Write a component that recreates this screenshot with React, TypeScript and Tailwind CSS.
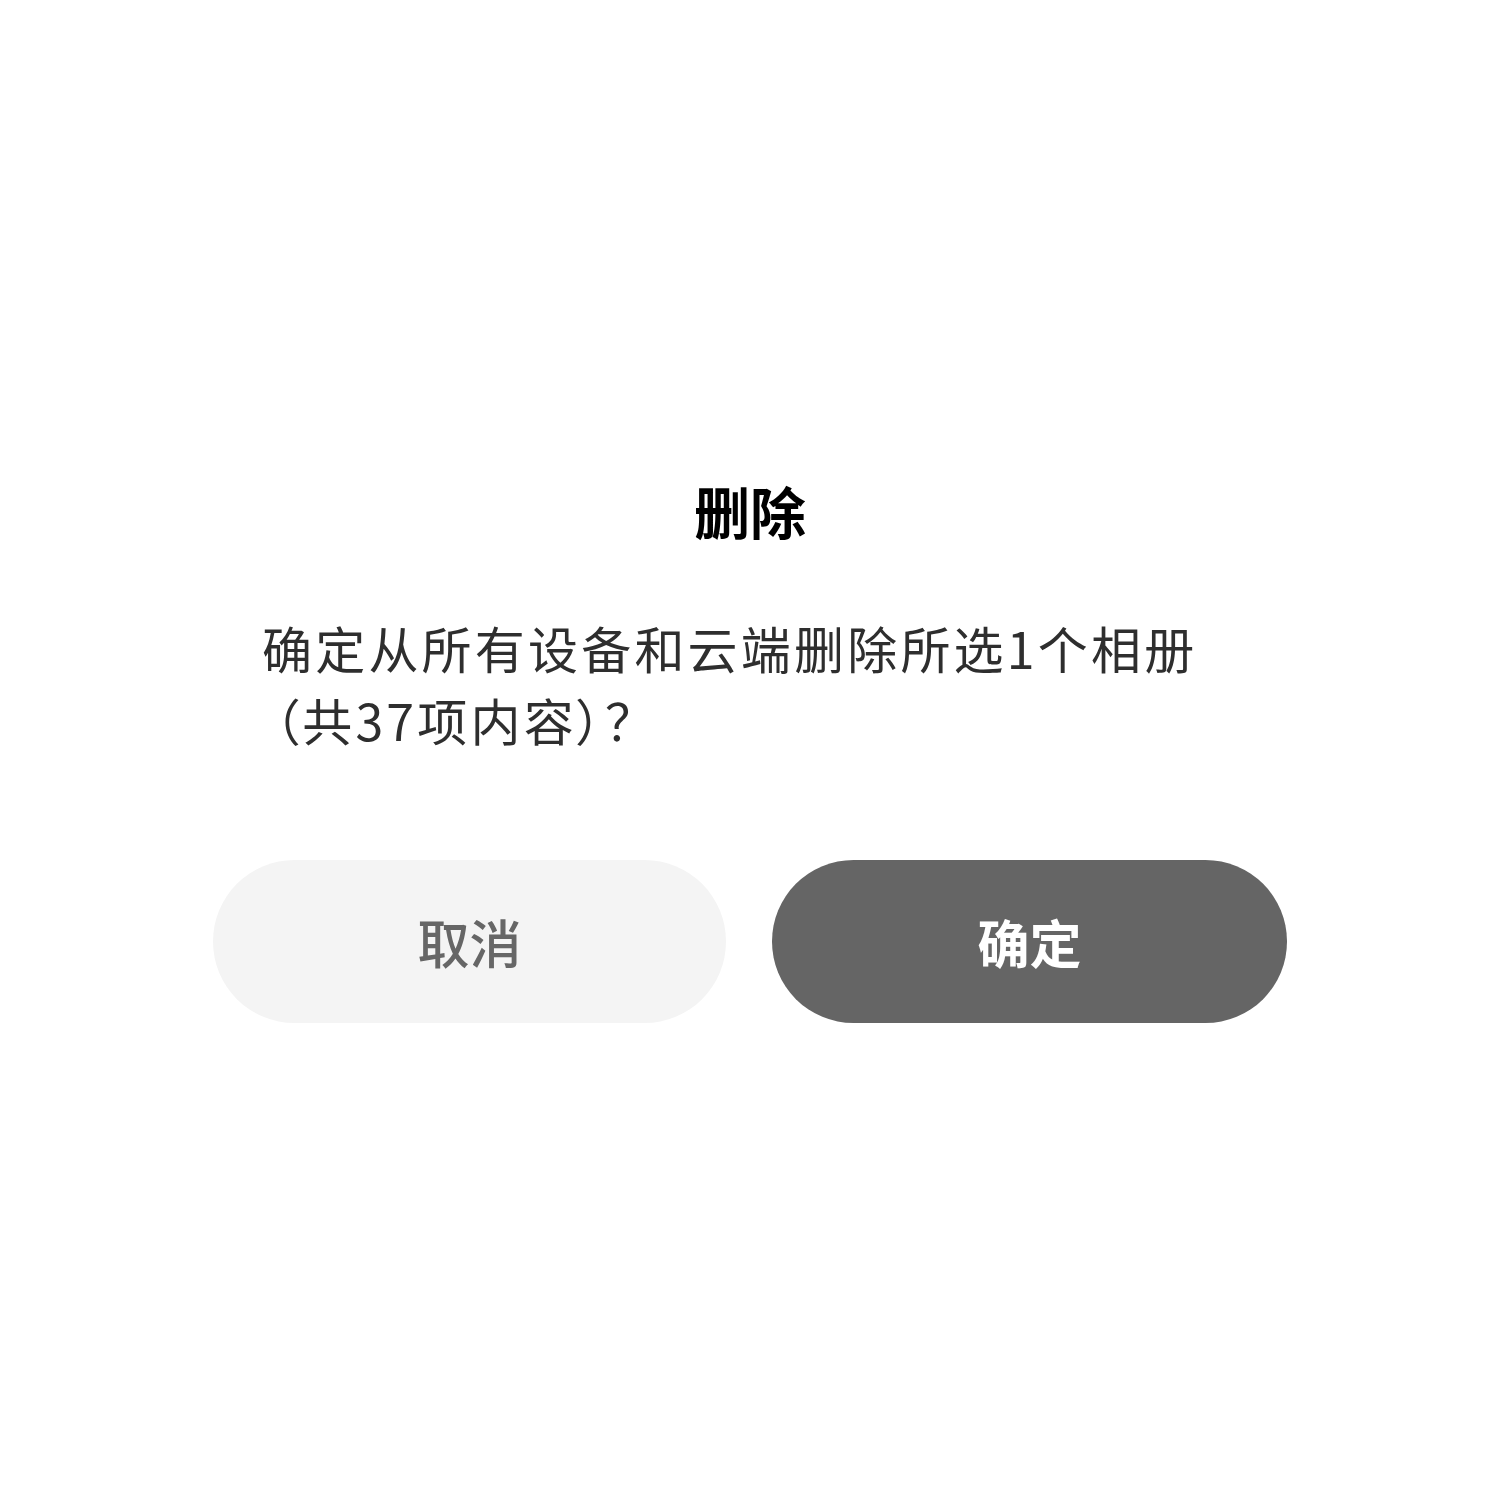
import React from 'react';

const FONT = { fontFamily: '"Noto Sans CJK SC", "Noto Sans", sans-serif' };

export default function App() {
  return (
    <div className="w-[1500px] h-[1500px] bg-white flex flex-col items-center" style={FONT}>
      {/* Title */}
      <h1 className="mt-[478px] text-[56px] leading-[64px] font-bold text-black">删除</h1>

      {/* Message */}
      <p className="mt-[69px] w-[976px] text-[50px] leading-[72px] tracking-[3.2px] text-[#2e2e2e] [font-feature-settings:'palt']">
        确定从所有设备和云端删除所选1个相册<span className="ml-[12px]">（</span>共37项内容）？
      </p>

      {/* Actions */}
      <div className="mt-[105px] flex gap-[46px]">
        <button className="w-[513px] h-[163px] rounded-full bg-[#f4f4f4] text-[52px] font-medium text-[#666666]">
          取消
        </button>
        <button className="w-[515px] h-[163px] rounded-full bg-[#656565] text-[52px] font-bold text-white">
          确定
        </button>
      </div>
    </div>
  );
}
